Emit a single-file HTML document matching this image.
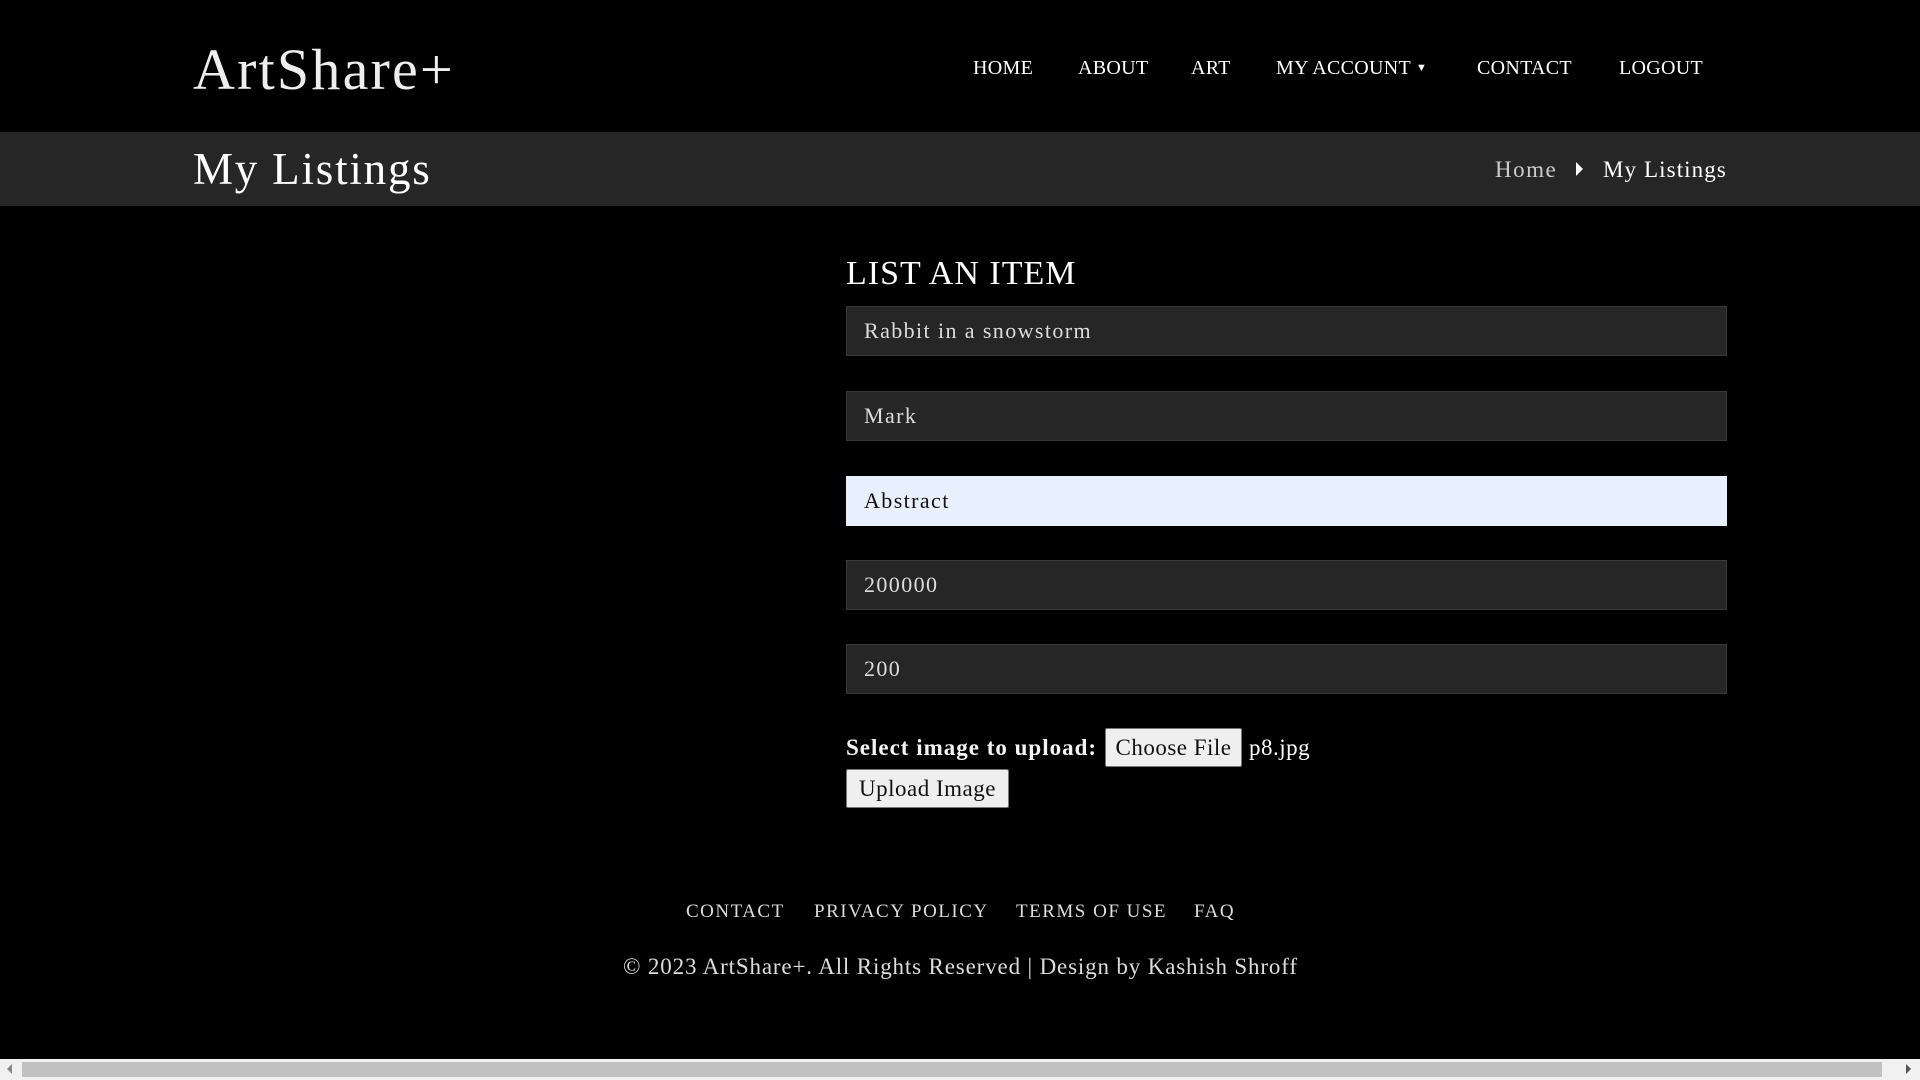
<!DOCTYPE html>
<html><head><meta charset="utf-8"><style>
*{margin:0;padding:0;box-sizing:border-box}
html,body{width:1920px;height:1080px;overflow:hidden;background:#000;color:#fff;font-family:"Liberation Serif",serif}
.a{position:absolute;white-space:nowrap}
.logo{left:193px;top:36px;font-size:58px;color:#eee;line-height:68px;letter-spacing:2.2px}
.nav{top:56px;font-size:20px;line-height:24px;color:#fff;letter-spacing:0.3px}
.bar{left:0;top:132px;width:1920px;height:74px;background:#262626}
.inp{left:846px;width:881px;height:50px;background:#262626;border:1px solid #3a3a3a;font-size:22px;line-height:48px;padding-left:17px;color:#ddd;letter-spacing:1.4px}
.btn{background:#efefef;border:1px solid #777;border-radius:2px;color:#111;font-size:23px;text-align:center;letter-spacing:0.5px}
.fl{top:901px;font-size:19px;line-height:22px;color:#ddd;letter-spacing:1.5px}
</style></head><body>
<div class="a logo">ArtShare+</div>
<div class="a nav" style="left:973px">HOME</div>
<div class="a nav" style="left:1078px">ABOUT</div>
<div class="a nav" style="left:1191px">ART</div>
<div class="a nav" style="left:1276px">MY ACCOUNT <span style="font-size:11px;position:relative;top:-3px">▼</span></div>
<div class="a nav" style="left:1477px">CONTACT</div>
<div class="a nav" style="left:1619px">LOGOUT</div>
<div class="a bar"></div>
<div class="a" style="left:193px;top:143px;font-size:45px;line-height:52px;letter-spacing:1.8px">My Listings</div>
<div class="a" style="left:1495px;top:156px;font-size:23px;line-height:28px;color:#ccc;letter-spacing:1.5px">Home</div>
<div class="a" style="left:1576px;top:162px;width:0;height:0;border-left:7px solid #fff;border-top:7px solid transparent;border-bottom:7px solid transparent"></div>
<div class="a" style="left:1603px;top:156px;font-size:23px;line-height:28px;letter-spacing:1.1px">My Listings</div>
<div class="a" style="left:846px;top:254px;font-size:34px;line-height:40px;letter-spacing:1px">LIST AN ITEM</div>
<div class="a inp" style="top:306px">Rabbit in a snowstorm</div>
<div class="a inp" style="top:391px">Mark</div>
<div class="a inp" style="top:476px;background:#e8f0fe;color:#111;border-color:#e8f0fe">Abstract</div>
<div class="a inp" style="top:560px">200000</div>
<div class="a inp" style="top:644px">200</div>
<div class="a" style="left:846px;top:733px;font-size:23px;line-height:30px;font-weight:bold;color:#f4f4f4;letter-spacing:1px">Select image to upload:</div>
<div class="a btn" style="left:1105px;top:728px;width:137px;height:39px;line-height:37px">Choose File</div>
<div class="a" style="left:1249px;top:733px;font-size:23px;line-height:30px;letter-spacing:0.5px">p8.jpg</div>
<div class="a btn" style="left:846px;top:769px;width:163px;height:39px;line-height:37px">Upload Image</div>
<div class="a fl" style="left:686px">CONTACT</div>
<div class="a fl" style="left:814px">PRIVACY POLICY</div>
<div class="a fl" style="left:1016px">TERMS OF USE</div>
<div class="a fl" style="left:1194px">FAQ</div>
<div class="a" style="left:623px;top:953px;font-size:23px;line-height:28px;color:#ddd;letter-spacing:0.85px">© 2023 ArtShare+. All Rights Reserved | Design by Kashish Shroff</div>
<div class="a" style="left:0;top:1059px;width:1920px;height:21px;background:#f1f1f1"></div>
<div class="a" style="left:22px;top:1062px;width:1860px;height:15px;background:#c1c1c1"></div>
<div class="a" style="left:7px;top:1064px;width:0;height:0;border-right:5px solid #888;border-top:5px solid transparent;border-bottom:5px solid transparent"></div>
<div class="a" style="left:1906px;top:1064px;width:0;height:0;border-left:5px solid #555;border-top:5px solid transparent;border-bottom:5px solid transparent"></div>
</body></html>
